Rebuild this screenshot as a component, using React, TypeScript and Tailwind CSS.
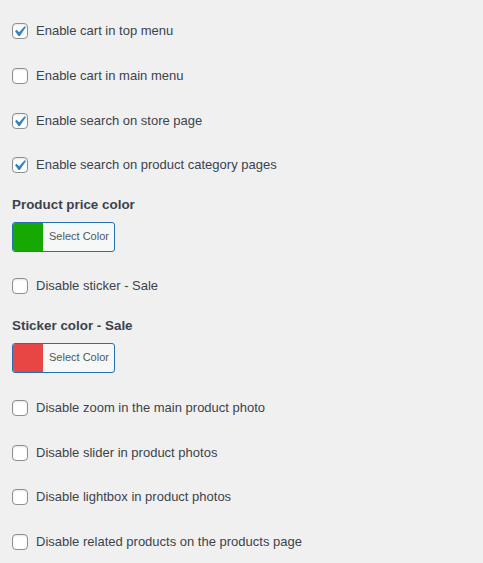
import React from 'react';

const font = { fontFamily: '"Liberation Sans", Arial, sans-serif' };

const Checkbox: React.FC<{ checked?: boolean; label: string; className?: string }> = ({ checked, label, className }) => (
  <label className={`flex items-center gap-[8px] ${className ?? ''}`}>
    <span className="relative block w-[16px] h-[16px] shrink-0 rounded-[4px] border border-[#8c8f94] bg-white shadow-[inset_0_1px_2px_rgba(0,0,0,0.1)]">
      {checked && (
        <svg viewBox="0 0 20 20" className="absolute -left-[4px] -top-[3px] w-[21px] h-[21px]">
          <path d="M14.83 4.89l1.34.94-5.81 8.38H9.02L5.78 9.67l1.34-1.25 2.57 2.4z" fill="#3582c4" />
        </svg>
      )}
    </span>
    <span className="text-[13px] text-[#3c434a] leading-[20px]">{label}</span>
  </label>
);

const ColorButton: React.FC<{ color: string; className?: string }> = ({ color, className }) => (
  <button className={`flex h-[30px] w-[103px] overflow-hidden rounded-[3px] border border-[#2271b1] bg-[#f6f7f7] ${className ?? ''}`}>
    <span className="block h-full w-[30px] shrink-0" style={{ backgroundColor: color }} />
    <span className="flex flex-1 items-center justify-center pl-[1px] text-[11px] text-[#50575e]">
      Select Color
    </span>
  </button>
);

const Row: React.FC<{ checked?: boolean; label: string }> = ({ checked, label }) => (
  <div className="flex h-[44.67px] items-center">
    <Checkbox checked={checked} label={label} />
  </div>
);

export default function App() {
  return (
    <div className="min-h-screen bg-[#f0f0f1] px-[12px] pt-[9px]" style={font}>
      <Row checked label="Enable cart in top menu" />
      <Row label="Enable cart in main menu" />
      <Row checked label="Enable search on store page" />
      <Row checked label="Enable search on product category pages" />

      <h3 className="mt-[7px] text-[13.4px] font-semibold leading-[20px] text-[#3c434a]">Product price color</h3>
      <ColorButton color="#16a903" className="mt-[7px]" />

      <div className="mt-[12px] flex h-[44px] items-center">
        <Checkbox label="Disable sticker - Sale" />
      </div>

      <h3 className="mt-[8px] text-[13.4px] font-semibold leading-[20px] text-[#3c434a]">Sticker color - Sale</h3>
      <ColorButton color="#e84545" className="mt-[7px]" />

      <div className="mt-[13px]">
        <Row label="Disable zoom in the main product photo" />
        <Row label="Disable slider in product photos" />
        <Row label="Disable lightbox in product photos" />
        <Row label="Disable related products on the products page" />
      </div>
    </div>
  );
}
